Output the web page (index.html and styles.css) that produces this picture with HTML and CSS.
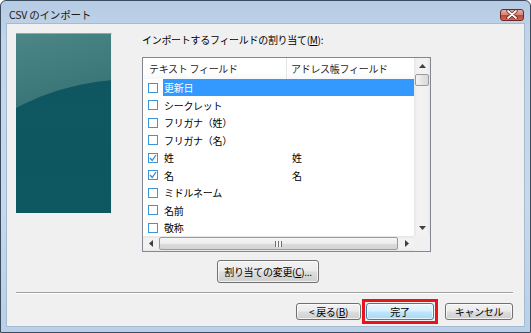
FILE: index.html
```html
<!DOCTYPE html>
<html lang="ja">
<head>
<meta charset="utf-8">
<title>CSV のインポート</title>
<link rel="stylesheet" href="styles.css">
</head>
<body>
<div class="window">
  <div class="titlebar">
    <span class="title">CSV のインポート</span>
    <div class="close">
      <svg width="12" height="9" viewBox="0 0 12 9"><path d="M2 1 L10 8 M10 1 L2 8" stroke="#5a1a12" stroke-width="3.2" stroke-linecap="round"/><path d="M2 1 L10 8 M10 1 L2 8" stroke="#ffffff" stroke-width="1.8" stroke-linecap="round"/></svg>
    </div>
  </div>
  <div class="client">
    <div class="main">
      <div class="banner"></div>
      <div class="right">
        <div class="label">インポートするフィールドの割り当て(<u>M</u>):</div>
        <div class="listbox">
          <div class="lv-body">
            <div class="header">
              <div class="hcol h1">テキスト フィールド</div>
              <div class="hcol h2">アドレス帳フィールド</div>
            </div>
            <div class="row">
              <span class="cb"></span>
              <div class="cells selected"><span class="c1">更新日</span><span class="c2"></span></div>
            </div>
            <div class="row">
              <span class="cb"></span>
              <div class="cells"><span class="c1">シークレット</span><span class="c2"></span></div>
            </div>
            <div class="row">
              <span class="cb"></span>
              <div class="cells"><span class="c1">フリガナ（姓）</span><span class="c2"></span></div>
            </div>
            <div class="row">
              <span class="cb"></span>
              <div class="cells"><span class="c1">フリガナ（名）</span><span class="c2"></span></div>
            </div>
            <div class="row">
              <span class="cb checked"><svg width="8" height="8" viewBox="0 0 8 8"><path d="M1 4 L3.2 6.5 L7 1" stroke="#3a86cc" stroke-width="1.3" fill="none"/></svg></span>
              <div class="cells"><span class="c1">姓</span><span class="c2">姓</span></div>
            </div>
            <div class="row">
              <span class="cb checked"><svg width="8" height="8" viewBox="0 0 8 8"><path d="M1 4 L3.2 6.5 L7 1" stroke="#3a86cc" stroke-width="1.3" fill="none"/></svg></span>
              <div class="cells"><span class="c1">名</span><span class="c2">名</span></div>
            </div>
            <div class="row">
              <span class="cb"></span>
              <div class="cells"><span class="c1">ミドルネーム</span><span class="c2"></span></div>
            </div>
            <div class="row">
              <span class="cb"></span>
              <div class="cells"><span class="c1">名前</span><span class="c2"></span></div>
            </div>
            <div class="row">
              <span class="cb"></span>
              <div class="cells"><span class="c1">敬称</span><span class="c2"></span></div>
            </div>
          </div>
          <div class="vscroll">
            <div class="arrow-v"><svg width="7" height="4" viewBox="0 0 7 4"><path d="M0 4 L3.5 0 L7 4 Z" fill="#404040"/></svg></div>
            <div class="vthumb"></div>
            <div class="vtrack"></div>
            <div class="arrow-v"><svg width="7" height="4" viewBox="0 0 7 4"><path d="M0 0 L3.5 4 L7 0 Z" fill="#404040"/></svg></div>
          </div>
          <div class="hscroll">
            <div class="arrow-h"><svg width="4" height="7" viewBox="0 0 4 7"><path d="M4 0 L0 3.5 L4 7 Z" fill="#404040"/></svg></div>
            <div class="hthumb"><span class="grip"></span></div>
            <div class="arrow-h"><svg width="4" height="7" viewBox="0 0 4 7"><path d="M0 0 L4 3.5 L0 7 Z" fill="#404040"/></svg></div>
          </div>
          <div class="corner"></div>
        </div>
        <button class="btn change">割り当ての変更(<u>C</u>)...</button>
      </div>
    </div>
    <div class="sep"></div>
    <div class="footer">
      <button class="btn back">&lt; 戻る(<u>B</u>)</button>
      <span class="mark"><button class="btn default">完了</button></span>
      <button class="btn cancel">キャンセル</button>
    </div>
  </div>
</div>
</body>
</html>
```
FILE: styles.css
```css
* { box-sizing: border-box; }
html, body { margin: 0; padding: 0; }
body {
  width: 531px;
  height: 333px;
  overflow: hidden;
  background: #ffffff;
  font-family: "Noto Sans CJK JP", "Noto Sans", sans-serif;
  font-size: 10px;
  letter-spacing: -0.3px;
  color: #000;
}
.window {
  width: 531px;
  height: 333px;
  display: flex;
  flex-direction: column;
  padding: 0 5px 5px;
  border: 1px solid #3b4c5e;
  border-radius: 6px 6px 0 0;
  background: linear-gradient(to bottom, #b6cce4 0%, #c2d5ea 12%, #c7d9ec 60%, #b9d0e8 100%);
}
.titlebar {
  height: 22px;
  flex: none;
  display: flex;
  align-items: center;
  justify-content: space-between;
  padding: 5px 1px 0 3px;
}
.title {
  font-size: 10.5px;
  color: #1a1a1a;
  line-height: 12px;
  letter-spacing: -0.2px;
}
.close {
  width: 24px;
  height: 12px;
  border: 1px solid #6e2b22;
  border-radius: 3px;
  background: linear-gradient(to bottom, #eab0a6 0%, #d9837a 45%, #c2463a 55%, #d0655a 100%);
  display: flex;
  align-items: center;
  justify-content: center;
}
.client {
  flex: 1;
  background: #f0f0f0;
  border: 1px solid #a6bbd1;
  padding: 9px 11px 0 9px;
  display: flex;
  flex-direction: column;
}
.main {
  display: flex;
  align-items: flex-start;
}
.banner {
  width: 96px;
  height: 180px;
  flex: none;
  position: relative;
  overflow: hidden;
  border-top: 1px solid #9aa3a6;
  border-right: 1px solid #e8eeee;
  background: linear-gradient(165deg, #4c8687 0%, #3a7678 35%, #2b6a6e 100%);
}
.banner::after {
  content: "";
  position: absolute;
  left: -80px;
  top: 45px;
  width: 400px;
  height: 290px;
  border-radius: 50%;
  background: linear-gradient(to bottom, #0f5660 0%, #0d5862 50%, #116068 100%);
}
.right {
  margin-left: 30px;
  width: 289px;
  display: flex;
  flex-direction: column;
}
.label {
  height: 14px;
  line-height: 14px;
  margin-bottom: 10px;
}
.listbox {
  width: 289px;
  height: 195px;
  border: 1px solid #828790;
  background: #fff;
  display: grid;
  grid-template-columns: 271px 16px;
  grid-template-rows: 178px 15px;
}
.lv-body {
  overflow: hidden;
}
.header {
  height: 21px;
  display: flex;
  background: linear-gradient(to bottom, #ffffff 0%, #ffffff 60%, #f7f8f9 100%);
}
.hcol {
  line-height: 21px;
  color: #1e1e1e;
}
.h1 {
  width: 144px;
  padding-left: 6px;
  border-right: 1px solid #e3e6e9;
}
.h2 {
  padding-left: 4px;
}
.row {
  height: 17.5px;
  display: flex;
  align-items: center;
}
.cb {
  width: 10px;
  height: 10px;
  margin-left: 5px;
  margin-right: 5px;
  flex: none;
  border: 1px solid #3d95d8;
  background: #fff;
  display: flex;
  align-items: center;
  justify-content: center;
}
.cells {
  flex: 1;
  height: 17px;
  display: flex;
  align-items: center;
  line-height: 17px;
}
.cells.selected {
  background: #3399ff;
  color: #fff;
}
.c1 {
  width: 124px;
  padding-left: 1px;
}
.c2 {
  padding-left: 5px;
}
.vscroll {
  grid-row: 1;
  grid-column: 2;
  display: flex;
  flex-direction: column;
  background: linear-gradient(to right, #e6e6e6 0%, #f2f2f2 20%, #f2f2f2 80%, #e8e8e8 100%);
}
.arrow-v {
  height: 16px;
  flex: none;
  display: flex;
  align-items: center;
  justify-content: center;
}
.vthumb {
  height: 12px;
  margin: 0 1px;
  flex: none;
  border: 1px solid #9b9b9b;
  border-radius: 2px;
  background: linear-gradient(to right, #f4f4f4 0%, #e6e6e6 50%, #d9d9d9 100%);
}
.vtrack { flex: 1; }
.hscroll {
  grid-row: 2;
  grid-column: 1;
  display: flex;
  align-items: stretch;
  background: linear-gradient(to bottom, #e6e6e6 0%, #f2f2f2 20%, #f2f2f2 80%, #e8e8e8 100%);
}
.arrow-h {
  width: 15px;
  flex: none;
  display: flex;
  align-items: center;
  justify-content: center;
}
.hthumb {
  flex: 1;
  margin: 1px 1px;
  border: 1px solid #9b9b9b;
  border-radius: 2px;
  background: linear-gradient(to bottom, #f6f6f6 0%, #ececec 50%, #dcdcdc 51%, #d4d4d4 100%);
  display: flex;
  align-items: center;
  justify-content: center;
}
.grip {
  width: 7px;
  height: 6px;
  background: repeating-linear-gradient(to right, #6f6f6f 0px, #6f6f6f 1px, #f4f4f4 1px, #f4f4f4 3px);
}
.corner {
  grid-row: 2;
  grid-column: 2;
  background: #f0f0f0;
}
.btn {
  font-family: inherit;
  font-size: 10px;
  letter-spacing: -0.3px;
  color: #000;
  padding: 0;
  border: 1px solid #707070;
  border-radius: 3px;
  background: linear-gradient(to bottom, #f2f2f2 0%, #ebebeb 48%, #dddddd 52%, #cfcfcf 100%);
  box-shadow: inset 0 0 0 1px rgba(255,255,255,0.7);
  line-height: 1;
  display: flex;
  align-items: center;
  justify-content: center;
}
.change {
  margin-top: 8px;
  margin-left: 75px;
  width: 102px;
  height: 23px;
}
.sep {
  margin-top: 9px;
  height: 2px;
  border-top: 1px solid #a0a0a0;
  border-bottom: 1px solid #ffffff;
}
.footer {
  margin-top: 5px;
  display: flex;
  justify-content: flex-end;
  align-items: center;
}
.footer .btn {
  height: 17px;
}
.back { width: 65px; margin-right: 1px; }
.mark {
  display: block;
  border: 3px solid #e8141b;
  padding: 1px;
  margin-right: 7px;
}
.default {
  width: 68px;
  border-color: #3c7fb1;
  background: linear-gradient(to bottom, #eaf6fd 0%, #d9f0fc 48%, #bee6fd 52%, #a7d9f5 100%);
}
.cancel { width: 68px; }
```
